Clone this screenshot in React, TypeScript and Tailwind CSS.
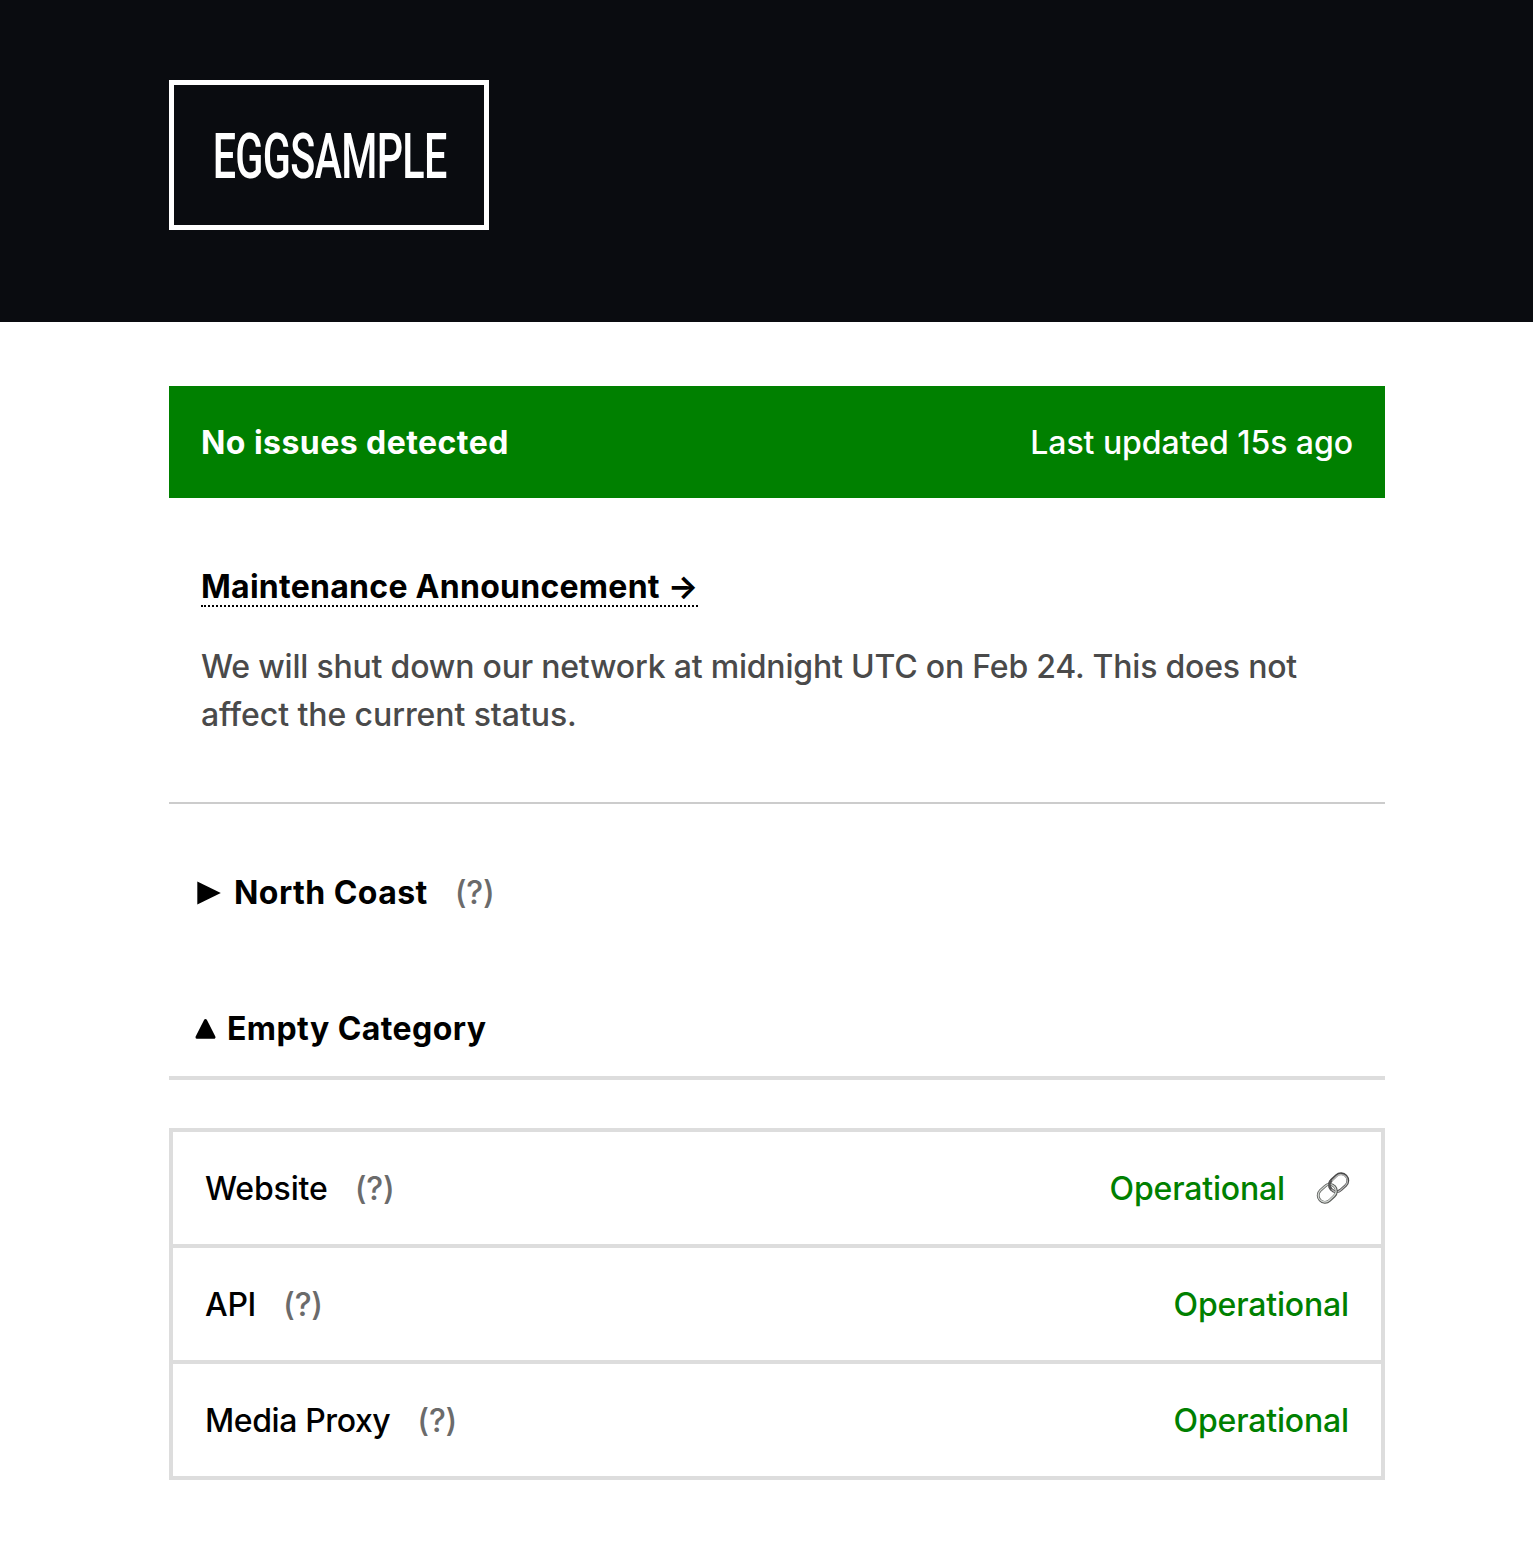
import React from "react";

const services = [
  { name: "Website", link: true, tracking: "tracking-[-0.15px]" },
  { name: "API", link: false, tracking: "tracking-[-0.3px]" },
  { name: "Media Proxy", link: false, tracking: "tracking-[-0.4px]" },
];

function Help() {
  return <span className="ml-[27px] tracking-[-0.2px] text-[#6b6b6b]">(?)</span>;
}

function LinkIcon() {
  return (
    <svg width="34" height="34" viewBox="0 0 34 34" fill="none" className="-mr-px ml-[31px] -mt-0.5">
      <g transform="rotate(-43 17 17)">
        <rect x="14.8" y="10.2" width="20" height="13.6" rx="6.8" stroke="#484848" strokeWidth="2.8" />
        <rect x="14.9" y="10.9" width="19.2" height="12.8" rx="6.4" stroke="#b5b5b5" strokeWidth="1.3" />
        <rect x="-0.8" y="10.2" width="20" height="13.6" rx="6.8" stroke="#555755" strokeWidth="2.8" />
        <rect x="-0.6" y="10.2" width="19.6" height="13.2" rx="6.6" stroke="#d0d4d0" strokeWidth="1.4" />
        <path d="M14.8 17c0-3.8 2.8-6.8 6.3-6.8" stroke="#555" strokeWidth="2.6" />
      </g>
    </svg>
  );
}

export default function App() {
  return (
    <div className="min-h-[1551px] bg-white font-['Inter',sans-serif] text-[32px] leading-[48px] font-[450] text-black">
      <header className="h-[322px] bg-[#0a0c10] pl-[169px] pt-20">
        <div className="flex h-[150px] w-80 items-center justify-center border-[5px] border-white pt-[3px] pl-px">
          <span className="inline-block scale-x-[0.655] whitespace-nowrap font-['Roboto',sans-serif] text-[63px] font-medium tracking-[-1px] text-white">EGGSAMPLE</span>
        </div>
      </header>
      <main className="ml-[169px] w-[1216px] pt-16">
        <div className="flex h-28 items-center justify-between bg-[#008000] px-8 pt-0.5 text-white">
          <span className="font-bold tracking-[0.45px]">No issues detected</span>
          <span className="tracking-[-0.05px]">Last updated 15s ago</span>
        </div>
        <section className="h-[306px] border-b-2 border-[#ccc] px-8 pt-[65px]">
          <a className="inline-block h-11 border-b-2 border-dotted border-black font-bold tracking-[0.27px]">Maintenance Announcement →</a>
          <p className="mt-8 whitespace-nowrap tracking-[-0.2px] text-[#4a4a4a]">
            We will shut down our network at midnight UTC on Feb 24. This does not
            <br />
            <span className="tracking-[-0.08px]">affect the current status.</span>
          </p>
        </section>
        <div className="mt-[65px] flex items-center pl-7">
          <svg width="24" height="24" viewBox="0 0 24 24" className="mr-[13px]">
            <path d="M0.3 0.5 23.8 12 0.3 23.5Z" />
          </svg>
          <b className="tracking-[0.45px]">North Coast</b>
          <Help />
        </div>
        <div className="mt-22 flex h-[75px] border-b-4 border-[#ddd] pl-[26px] font-bold tracking-[0.43px]">
          <svg width="22" height="22" viewBox="0 0 22 22" className="mr-2.5 mt-[13px]">
            <path d="M10.5 2.5 19 19.3H2Z" stroke="black" strokeWidth="3" strokeLinejoin="round" />
          </svg>
          Empty Category
        </div>
        <ul className="mt-12 border-4 border-[#ddd]">
          {services.map((s) => (
            <li key={s.name} className="flex h-29 items-center border-b-4 border-[#ddd] px-8 pt-0.5 last:h-28 last:border-b-0">
              <span className={s.tracking}>{s.name}</span>
              <Help />
              <span className="ml-auto tracking-[-0.17px] text-[#008000]">Operational</span>
              {s.link && <LinkIcon />}
            </li>
          ))}
        </ul>
      </main>
    </div>
  );
}
